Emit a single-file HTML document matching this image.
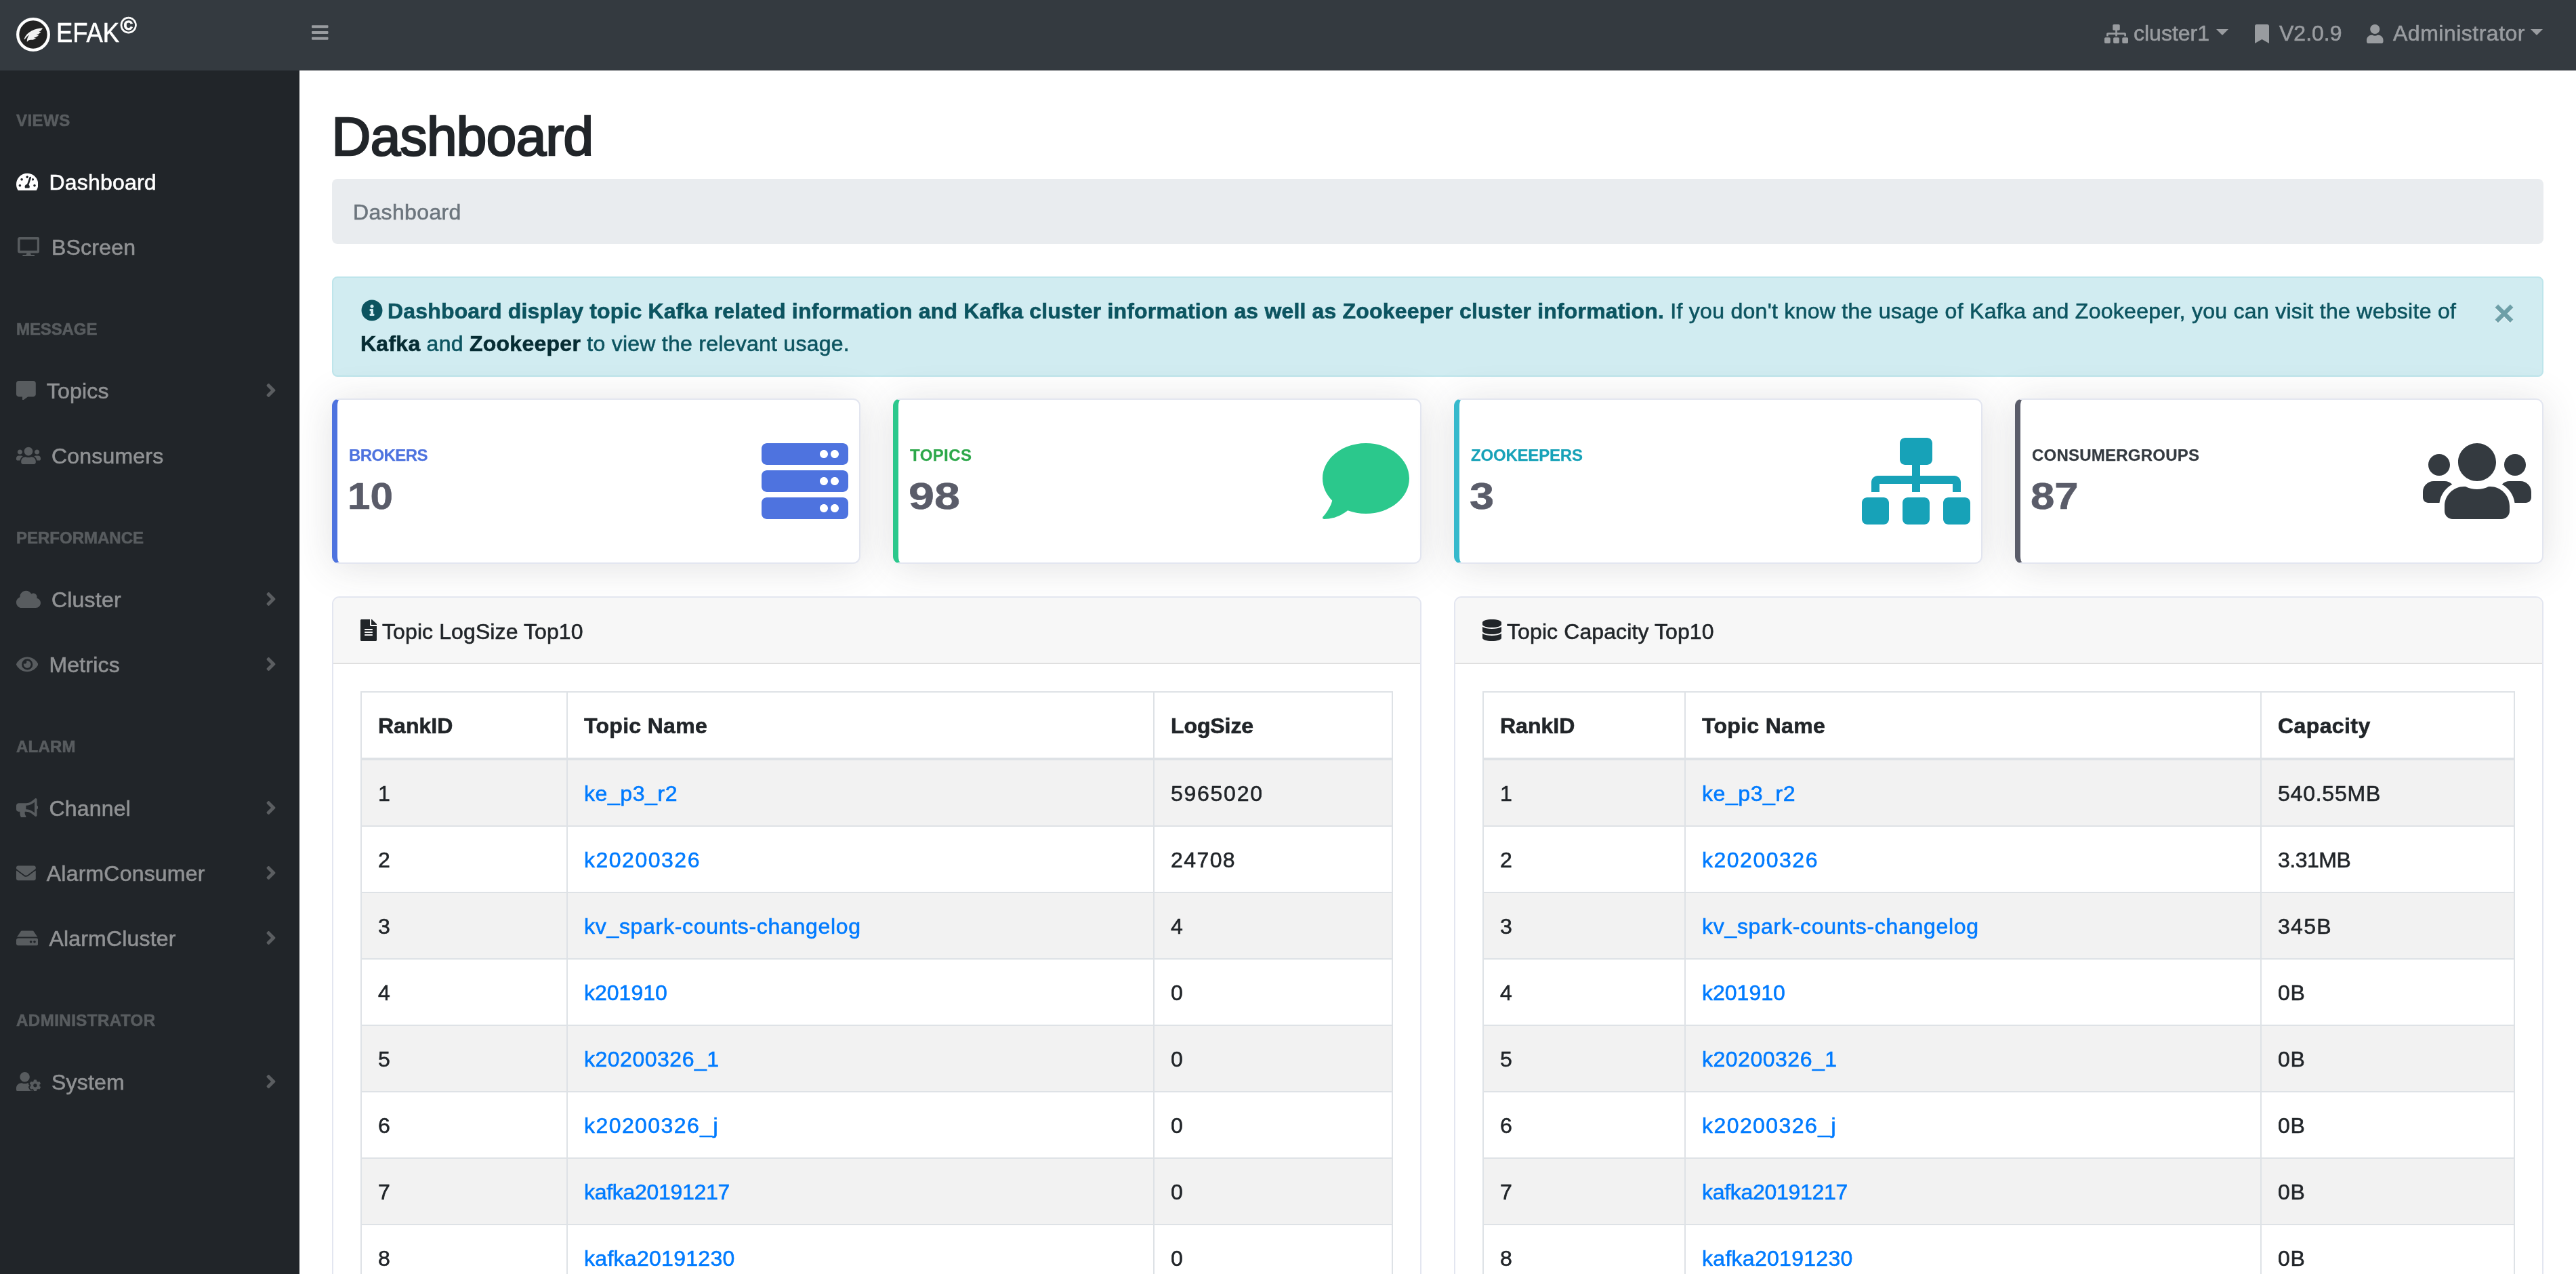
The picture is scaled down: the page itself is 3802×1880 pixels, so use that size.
<!DOCTYPE html>
<html lang="en">
<head>
<meta charset="utf-8">
<title>Dashboard - EFAK</title>
<style>
*{box-sizing:border-box;margin:0;padding:0}
html,body{width:3802px;height:1880px;overflow:hidden;background:#fff}
body{-webkit-text-stroke:.6px;font-family:"Liberation Sans",Arial,sans-serif;font-size:32px;line-height:48px;color:#212529;position:relative}
svg{display:block;fill:currentColor;flex:none}
a{text-decoration:none;color:#007bff}
.abs{position:absolute;white-space:nowrap}
.sx{display:inline-block;transform-origin:0 50%;white-space:nowrap}

/* top nav */
#topnav,#side,#main{will-change:transform}
#topnav{position:absolute;left:0;top:0;width:3802px;height:104px;background:#343a40;z-index:5}
#logo{position:absolute;left:24px;top:26px;width:50px;height:50px}
#brand{position:absolute;left:83px;top:24px;font-size:40px;line-height:48px;color:#fff;white-space:nowrap}
#brand sup{font-size:33px;position:absolute;left:94.5px;top:-10px;line-height:48px;font-weight:bold;-webkit-text-stroke:.8px}
#burger{position:absolute;left:460px;top:34px;color:#999ca0}
.tn{position:absolute;top:24px;height:48px;color:#999ca0;white-space:nowrap}
.tn svg{position:absolute}
.caret{position:absolute;width:0;height:0;border-left:9.6px solid transparent;border-right:9.6px solid transparent;border-top:9.6px solid #999ca0}

/* sidebar */
#side{position:absolute;left:0;top:104px;width:442px;height:1776px;background:#212529}
.sh{height:116px;padding:56px 0 0 24px;font-size:24px;line-height:36px;font-weight:bold;color:#585c5f;text-transform:uppercase;white-space:nowrap}
.sl{letter-spacing:.2px;position:relative;height:96px;padding:25px 0 23px 24px;color:#909294;white-space:nowrap;display:flex;align-items:flex-start}
.sl.act{color:#fff}
.sl .ic{color:#585c5f;height:48px;display:flex;align-items:center;margin-right:16px;margin-top:-1px}
.sl.act .ic{color:#fff}
.sl .ar{position:absolute;left:391.6px;top:32px;color:#5b5e61}

/* main */
#main{position:absolute;left:442px;top:104px;width:3360px;height:1776px;background:#fff;overflow:hidden}
#h1{position:absolute;left:47.5px;top:49.7px;font-size:80px;line-height:96px;font-weight:normal;letter-spacing:-.6px;-webkit-text-stroke:2.6px #212529;white-space:nowrap}
#bc{position:absolute;left:48px;top:160px;width:3264px;height:96px;background:#e9ecef;border-radius:8px;padding:25px 31px 23px;color:#6c757d;letter-spacing:.35px}
#alert{position:absolute;left:48px;top:304px;width:3264px;height:148px;background:#d1ecf1;border:2px solid #bee5eb;border-radius:8px;color:#0c5460}
#al1,#al2{position:absolute;left:40px;white-space:nowrap}
#al1{top:25px;padding-left:40px}
#al2{top:73px}
.alk{font-weight:bold;color:#062c33}
#close{position:absolute;right:41px;top:28px;font-size:52px;line-height:48px;font-weight:bold;color:#0c5460;opacity:.5;text-shadow:0 2px 0 #fff}

/* stat cards */
.stat{position:absolute;top:484px;width:780px;height:244px;background:#fff;border:2px solid #e3e6f0;border-left-width:8px;border-radius:11px;box-shadow:0 4.8px 56px 0 rgba(58,59,69,.15)}
.st{-webkit-text-stroke:.25px;position:absolute;left:17px;top:64px;font-size:24px;line-height:36px;font-weight:bold;text-transform:uppercase;white-space:nowrap}
.sn{position:absolute;left:15px;top:108px;font-size:56px;line-height:68px;font-weight:bold;color:#5a5c69;white-space:nowrap}
.c1{border-left-color:#4e73df}.c1 .st{color:#4e73df}.c1 .si{color:#4e73df}
.c2{border-left-color:#2bc88c}.c2 .st{color:#2da84a}.c2 .si{color:#2bc88c}
.c3{border-left-color:#36b9cc}.c3 .st{color:#17a2b8}.c3 .si{color:#17a2b8}
.c4{border-left-color:#5a5c69}.c4 .st{color:#343a40}.c4 .si{color:#343a40}

/* panels */
.panel{position:absolute;top:776px;width:1608px;height:1300px;background:#fff;border:2px solid #e3e6f0;border-radius:11px;overflow:hidden}
.ph{position:relative;height:98px;background:#f7f7f7;border-bottom:2px solid #dfdfdf}
.pb{padding:40px}
table{border-collapse:separate;border-spacing:0;table-layout:fixed;width:1524px}
th:last-child,td:last-child{border-right:2px solid #dee2e6}
th,td{border-left:2px solid #dee2e6;padding:25px 24px 23px 24px;text-align:left;white-space:nowrap;height:98px;border-bottom:2px solid #dee2e6}
th{border-top:2px solid #dee2e6;border-bottom:4px solid #dee2e6;height:102px;font-weight:bold}
tbody tr:nth-child(odd) td{background:#f2f2f2}
</style>
</head>
<body>

<div id="topnav">
  <svg id="logo" viewBox="0 0 50 50"><circle cx="25" cy="25" r="22.8" fill="#222" stroke="#fff" stroke-width="4.3"/><path d="M39 15.200C28 16 15.500 20.500 11.800 31c-.3 1.200.5 1.600 1.200.6 1.500-2.300 3.500-4.600 6-6.100-2 2.500-3.500 6.500-3.200 10.600 1.700-2.600 3.700-3.500 6.200-3.300 3 .2 5.500-.8 7.500-2.800-1.500.3-2.700.2-3.700-.2 3.200-.5 6-2 7.700-4.500-1.500.5-2.700.5-3.700.2 3.200-.9 5.500-2.700 6.700-4.700-1.200.5-2.200.5-3.100.3 2.600-1.300 4.400-3.300 5.600-5.900z" fill="#f2f2f2"/></svg>
  <div id="brand"><span class="sx" style="transform:scaleX(.91)">EFAK</span><sup>©</sup></div>
  <svg id="burger" width="24.5" height="28" viewBox="0 0 448 512"><path d="M16 132h416c8.837 0 16-7.163 16-16V76c0-8.837-7.163-16-16-16H16C7.163 60 0 67.163 0 76v40c0 8.837 7.163 16 16 16zm0 160h416c8.837 0 16-7.163 16-16v-40c0-8.837-7.163-16-16-16H16c-8.837 0-16 7.163-16 16v40c0 8.837 7.163 16 16 16zm0 160h416c8.837 0 16-7.163 16-16v-40c0-8.837-7.163-16-16-16H16c-8.837 0-16 7.163-16 16v40c0 8.837 7.163 16 16 16z"/></svg>

  <div class="tn" style="left:3106px"><svg style="left:0;top:12px" width="35.0" height="28" viewBox="0 0 640 512"><path d="M128 352H32c-17.670 0-32 14.330-32 32v96c0 17.670 14.330 32 32 32h96c17.670 0 32-14.330 32-32v-96c0-17.670-14.330-32-32-32zm-24-80h192v48h48v-48h192v48h48v-57.590c0-21.170-17.230-38.410-38.410-38.410H344v-64h40c17.670 0 32-14.330 32-32V32c0-17.670-14.330-32-32-32H256c-17.670 0-32 14.330-32 32v96c0 17.670 14.330 32 32 32h40v64H94.410C73.230 224 56 241.230 56 262.410V320h48v-48zm264 80h-96c-17.670 0-32 14.330-32 32v96c0 17.670 14.330 32 32 32h96c17.670 0 32-14.330 32-32v-96c0-17.670-14.330-32-32-32zm240 0h-96c-17.670 0-32 14.330-32 32v96c0 17.670 14.330 32 32 32h96c17.670 0 32-14.330 32-32v-96c0-17.670-14.330-32-32-32z"/></svg><span class="abs" style="left:43px;top:1px">cluster1</span><i class="caret" style="left:165px;top:19px"></i></div>
  <div class="tn" style="left:3328px"><svg style="left:0;top:12px" width="21.0" height="28" viewBox="0 0 384 512"><path d="M0 512V48C0 21.490 21.490 0 48 0h288c26.510 0 48 21.490 48 48v464L192 400 0 512z"/></svg><span class="abs" style="left:36px;top:1px">V2.0.9</span></div>
  <div class="tn" style="left:3492px"><svg style="left:1px;top:12px" width="24.5" height="28" viewBox="0 0 448 512"><path d="M224 256c70.700 0 128-57.300 128-128S294.700 0 224 0 96 57.300 96 128s57.300 128 128 128zm89.600 32h-16.700c-22.200 10.200-46.900 16-72.900 16s-50.600-5.800-72.900-16h-16.700C60.200 288 0 348.200 0 422.400V464c0 26.500 21.500 48 48 48h352c26.500 0 48-21.500 48-48v-41.600c0-74.200-60.200-134.400-134.400-134.400z"/></svg><span class="abs" style="left:40px;top:1px;letter-spacing:.5px">Administrator</span><i class="caret" style="left:243px;top:19px"></i></div>
</div>

<div id="side">
<div class="sh" style="letter-spacing:0.45px">Views</div>
<div class="sl act"><span class="ic" style="width:32.4px;justify-content:center"><svg width="32.4" height="28.8" viewBox="0 0 576 512"><path d="M288 32C128.940 32 0 160.940 0 320c0 52.800 14.250 102.260 39.060 144.800 5.610 9.620 16.300 15.200 27.440 15.200h443c11.140 0 21.830-5.580 27.440-15.200C561.750 422.260 576 372.800 576 320c0-159.060-128.940-288-288-288zm0 64c14.710 0 26.580 10.130 30.320 23.650-1.110 2.260-2.640 4.230-3.450 6.670l-9.220 27.670c-5.130 3.490-10.970 6.010-17.640 6.010-17.670 0-32-14.330-32-32S270.330 96 288 96zM96 384c-17.670 0-32-14.330-32-32s14.330-32 32-32 32 14.330 32 32-14.330 32-32 32zm48-160c-17.670 0-32-14.330-32-32s14.330-32 32-32 32 14.330 32 32-14.330 32-32 32zm246.770-72.410l-61.330 184C343.130 347.330 352 364.540 352 384c0 11.720-3.380 22.550-8.880 32H232.880c-5.500-9.450-8.880-20.280-8.880-32 0-33.940 26.500-61.430 59.900-63.590l61.340-184.010c4.170-12.560 17.730-19.450 30.360-15.170 12.570 4.190 19.350 17.790 15.170 30.360zm14.660 57.200l15.520-46.550c3.470-1.290 7.130-2.230 11.050-2.230 17.670 0 32 14.330 32 32s-14.330 32-32 32c-11.380-.01-20.890-6.280-26.570-15.220zM480 384c-17.670 0-32-14.330-32-32s14.330-32 32-32 32 14.330 32 32-14.330 32-32 32z"/></svg></span><span>Dashboard</span></div>
<div class="sl"><span class="ic" style="width:36.0px;justify-content:center"><svg width="32.4" height="28.8" viewBox="0 0 576 512"><path d="M528 0H48C21.500 0 0 21.500 0 48v320c0 26.500 21.500 48 48 48h192l-16 48h-72c-13.300 0-24 10.700-24 24s10.700 24 24 24h272c13.300 0 24-10.700 24-24s-10.700-24-24-24h-72l-16-48h192c26.500 0 48-21.500 48-48V48c0-26.500-21.500-48-48-48zm-16 352H64V64h448v288z"/></svg></span><span>BScreen</span></div>
<div class="sh" style="letter-spacing:-0.1px">Message</div>
<div class="sl"><span class="ic" style="width:28.8px;justify-content:center"><svg width="28.8" height="28.8" viewBox="0 0 512 512"><path d="M448 0H64C28.700 0 0 28.700 0 64v288c0 35.300 28.700 64 64 64h96v84c0 9.800 11.200 15.500 19.100 9.700L304 416h144c35.300 0 64-28.700 64-64V64c0-35.300-28.700-64-64-64z"/></svg></span><span>Topics</span><svg class="ar" width="16.0" height="32" viewBox="0 0 256 512"><path d="M224.300 273l-136 136c-9.400 9.400-24.600 9.400-33.900 0l-22.600-22.600c-9.400-9.400-9.400-24.600 0-33.900l96.400-96.400-96.400-96.400c-9.400-9.400-9.400-24.600 0-33.900L54.300 103c9.400-9.400 24.600-9.400 33.900 0l136 136c9.500 9.400 9.500 24.600.1 34z"/></svg></div>
<div class="sl"><span class="ic" style="width:36.0px;justify-content:center"><svg width="36.0" height="28.8" viewBox="0 0 640 512"><path d="M96 224c35.300 0 64-28.700 64-64s-28.700-64-64-64-64 28.700-64 64 28.700 64 64 64zm448 0c35.300 0 64-28.700 64-64s-28.700-64-64-64-64 28.700-64 64 28.700 64 64 64zm32 32h-64c-17.600 0-33.500 7.100-45.100 18.600 40.300 22.100 68.900 62 75.100 109.400h66c17.700 0 32-14.300 32-32v-32c0-35.300-28.700-64-64-64zm-256 0c61.900 0 112-50.100 112-112S381.900 32 320 32 208 82.100 208 144s50.100 112 112 112zm76.800 32h-8.300c-20.800 10-43.900 16-68.500 16s-47.600-6-68.500-16h-8.300C179.600 288 128 339.600 128 403.200V432c0 26.500 21.500 48 48 48h288c26.500 0 48-21.500 48-48v-28.800c0-63.600-51.600-115.200-115.200-115.200zm-223.700-13.400C161.500 263.100 145.600 256 128 256H64c-35.300 0-64 28.700-64 64v32c0 17.700 14.300 32 32 32h65.900c6.300-47.400 34.900-87.300 75.200-109.400z"/></svg></span><span>Consumers</span></div>
<div class="sh" style="letter-spacing:0px">Performance</div>
<div class="sl"><span class="ic" style="width:36.0px;justify-content:center"><svg width="36.0" height="28.8" viewBox="0 0 640 512"><path d="M537.600 226.600c4.100-10.700 6.400-22.400 6.400-34.600 0-53-43-96-96-96-19.700 0-38.100 6-53.300 16.200C367 64.200 315.300 32 256 32c-88.400 0-160 71.600-160 160 0 2.700.1 5.400.2 8.100C40.200 219.800 0 273.200 0 336c0 79.500 64.500 144 144 144h368c70.700 0 128-57.300 128-128 0-61.900-44-113.600-102.400-125.400z"/></svg></span><span>Cluster</span><svg class="ar" width="16.0" height="32" viewBox="0 0 256 512"><path d="M224.300 273l-136 136c-9.400 9.400-24.600 9.400-33.900 0l-22.600-22.600c-9.400-9.400-9.400-24.600 0-33.900l96.400-96.400-96.400-96.400c-9.400-9.400-9.400-24.600 0-33.900L54.300 103c9.400-9.400 24.600-9.400 33.900 0l136 136c9.500 9.400 9.500 24.600.1 34z"/></svg></div>
<div class="sl"><span class="ic" style="width:32.4px;justify-content:center"><svg width="32.4" height="28.8" viewBox="0 0 576 512"><path d="M572.520 241.400C518.290 135.590 410.930 64 288 64S57.680 135.640 3.480 241.410a32.350 32.350 0 0 0 0 29.190C57.710 376.410 165.070 448 288 448s230.320-71.640 284.520-177.410a32.350 32.350 0 0 0 0-29.190zM288 400a144 144 0 1 1 144-144 143.930 143.930 0 0 1-144 144zm0-240a95.310 95.310 0 0 0-25.310 3.790 47.850 47.850 0 0 1-66.900 66.900A95.780 95.780 0 1 0 288 160z"/></svg></span><span>Metrics</span><svg class="ar" width="16.0" height="32" viewBox="0 0 256 512"><path d="M224.300 273l-136 136c-9.400 9.400-24.600 9.400-33.900 0l-22.600-22.600c-9.400-9.400-9.400-24.600 0-33.900l96.400-96.400-96.400-96.400c-9.400-9.400-9.400-24.600 0-33.900L54.300 103c9.400-9.400 24.600-9.400 33.900 0l136 136c9.500 9.400 9.500 24.600.1 34z"/></svg></div>
<div class="sh" style="letter-spacing:0.2px">Alarm</div>
<div class="sl"><span class="ic" style="width:32.4px;justify-content:center"><svg width="32.4" height="28.8" viewBox="0 0 576 512"><path d="M576 240c0-23.630-12.950-44.040-32-55.120V32.010C544 23.260 537.020 0 512 0c-7.120 0-14.190 2.380-19.980 7.020l-85.030 68.030C364.280 109.190 310.660 128 256 128H64c-35.350 0-64 28.650-64 64v96c0 35.350 28.650 64 64 64h33.700c-1.390 10.480-2.180 21.140-2.180 32 0 39.770 9.260 77.350 25.560 110.940 5.190 10.690 16.520 17.060 28.400 17.060h74.280c26.050 0 41.690-29.840 25.900-50.560-16.400-21.520-26.150-48.360-26.150-77.440 0-11.110 1.620-21.790 4.410-32H256c54.660 0 108.280 18.810 150.980 52.950l85.030 68.030a32.023 32.023 0 0 0 19.980 7.020c24.920 0 32-22.780 32-32V295.130C563.050 284.040 576 263.630 576 240zm-96 141.420l-33.050-26.440C392.950 311.780 325.120 288 256 288v-96c69.120 0 136.950-23.780 190.950-66.980L480 98.580v282.840z"/></svg></span><span>Channel</span><svg class="ar" width="16.0" height="32" viewBox="0 0 256 512"><path d="M224.300 273l-136 136c-9.400 9.400-24.600 9.400-33.900 0l-22.600-22.600c-9.400-9.400-9.400-24.600 0-33.900l96.400-96.400-96.400-96.400c-9.400-9.400-9.400-24.600 0-33.900L54.300 103c9.400-9.400 24.600-9.400 33.900 0l136 136c9.500 9.400 9.500 24.600.1 34z"/></svg></div>
<div class="sl"><span class="ic" style="width:28.8px;justify-content:center"><svg width="28.8" height="28.8" viewBox="0 0 512 512"><path d="M502.300 190.800c3.900-3.100 9.700-.2 9.700 4.700V400c0 26.500-21.500 48-48 48H48c-26.500 0-48-21.500-48-48V195.600c0-5 5.700-7.800 9.700-4.700 22.400 17.400 52.100 39.500 154.100 113.600 21.100 15.400 56.700 47.800 92.200 47.600 35.700.3 72-32.800 92.300-47.600 102-74.100 131.600-96.300 154-113.700zM256 320c23.200.4 56.600-29.200 73.400-41.400 132.700-96.300 142.800-104.700 173.400-128.700 5.800-4.500 9.200-11.500 9.200-18.900v-19c0-26.500-21.500-48-48-48H48C21.500 64 0 85.500 0 112v19c0 7.400 3.400 14.300 9.200 18.900 30.600 23.900 40.700 32.400 173.400 128.700 16.800 12.200 50.200 41.800 73.400 41.400z"/></svg></span><span>AlarmConsumer</span><svg class="ar" width="16.0" height="32" viewBox="0 0 256 512"><path d="M224.300 273l-136 136c-9.400 9.400-24.600 9.400-33.900 0l-22.600-22.600c-9.400-9.400-9.400-24.600 0-33.900l96.400-96.400-96.400-96.400c-9.400-9.400-9.400-24.600 0-33.900L54.300 103c9.400-9.400 24.600-9.400 33.900 0l136 136c9.500 9.400 9.500 24.600.1 34z"/></svg></div>
<div class="sl"><span class="ic" style="width:32.4px;justify-content:center"><svg width="32.4" height="28.8" viewBox="0 0 576 512"><path d="M576 304v96c0 26.510-21.490 48-48 48H48c-26.510 0-48-21.490-48-48v-96c0-26.510 21.490-48 48-48h480c26.510 0 48 21.490 48 48zm-48-80a79.557 79.557 0 0 1 30.777 6.165L462.250 85.374A48.003 48.003 0 0 0 422.311 64H153.689a48 48 0 0 0-39.938 21.374L17.223 230.165A79.557 79.557 0 0 1 48 224h480zm-48 96c-17.673 0-32 14.327-32 32s14.327 32 32 32 32-14.327 32-32-14.327-32-32-32zm-96 0c-17.673 0-32 14.327-32 32s14.327 32 32 32 32-14.327 32-32-14.327-32-32-32z"/></svg></span><span>AlarmCluster</span><svg class="ar" width="16.0" height="32" viewBox="0 0 256 512"><path d="M224.300 273l-136 136c-9.400 9.400-24.600 9.400-33.900 0l-22.600-22.600c-9.400-9.400-9.400-24.600 0-33.900l96.400-96.400-96.400-96.400c-9.400-9.400-9.400-24.600 0-33.900L54.300 103c9.400-9.400 24.600-9.400 33.900 0l136 136c9.500 9.400 9.500 24.600.1 34z"/></svg></div>
<div class="sh" style="letter-spacing:0.5px">Administrator</div>
<div class="sl"><span class="ic" style="width:36.0px;justify-content:center"><svg width="36.0" height="28.8" viewBox="0 0 640 512"><path d="M610.500 373.300c2.600-14.100 2.600-28.500 0-42.600l25.800-14.900c3-1.700 4.300-5.200 3.300-8.500-6.700-21.600-18.200-41.200-33.200-57.400-2.300-2.500-6-3.100-9-1.400l-25.800 14.900c-10.900-9.300-23.400-16.500-36.900-21.300v-29.800c0-3.400-2.400-6.400-5.700-7.100-22.300-5-45-4.800-66.200 0-3.300.7-5.700 3.700-5.700 7.100v29.800c-13.500 4.800-26 12-36.900 21.300l-25.800-14.900c-2.900-1.700-6.700-1.100-9 1.400-15 16.200-26.500 35.800-33.200 57.400-1 3.300.4 6.800 3.300 8.500l25.800 14.900c-2.600 14.100-2.600 28.500 0 42.600l-25.800 14.900c-3 1.700-4.300 5.200-3.300 8.500 6.700 21.600 18.200 41.100 33.200 57.400 2.300 2.500 6 3.100 9 1.400l25.800-14.900c10.900 9.300 23.400 16.500 36.900 21.300v29.800c0 3.400 2.400 6.400 5.700 7.100 22.300 5 45 4.800 66.200 0 3.300-.7 5.700-3.700 5.700-7.100v-29.800c13.500-4.800 26-12 36.900-21.300l25.800 14.900c2.900 1.700 6.700 1.100 9-1.400 15-16.200 26.500-35.800 33.200-57.400 1-3.300-.4-6.800-3.300-8.500l-25.800-14.900zM496 400.500c-26.800 0-48.500-21.800-48.500-48.500s21.800-48.500 48.500-48.500 48.500 21.800 48.500 48.500-21.700 48.500-48.500 48.500zM224 256c70.700 0 128-57.300 128-128S294.700 0 224 0 96 57.300 96 128s57.300 128 128 128zm201.200 226.500c-2.300-1.200-4.600-2.600-6.800-3.900l-7.900 4.600c-6 3.400-12.800 5.300-19.600 5.300-10.900 0-21.400-4.600-28.900-12.600-18.300-19.800-32.300-43.900-40.200-69.600-5.500-17.700 1.900-36.400 17.900-45.700l7.900-4.600c-.1-2.600-.1-5.200 0-7.800l-7.900-4.600c-16-9.200-23.400-28-17.900-45.700.9-2.900 2.200-5.800 3.200-8.700-3.800-.3-7.500-1.200-11.400-1.200h-16.700c-22.200 10.200-46.900 16-72.900 16s-50.600-5.800-72.900-16h-16.700C60.200 288 0 348.200 0 422.400V464c0 26.500 21.500 48 48 48h352c10.100 0 19.500-3.200 27.200-8.500-1.200-3.800-2-7.700-2-11.800v-9.200z"/></svg></span><span>System</span><svg class="ar" width="16.0" height="32" viewBox="0 0 256 512"><path d="M224.300 273l-136 136c-9.400 9.400-24.600 9.400-33.900 0l-22.600-22.600c-9.400-9.400-9.400-24.600 0-33.900l96.400-96.400-96.400-96.400c-9.400-9.400-9.400-24.600 0-33.900L54.300 103c9.400-9.400 24.600-9.400 33.900 0l136 136c9.500 9.400 9.500 24.600.1 34z"/></svg></div>
</div>

<div id="main">

  <h1 id="h1">Dashboard</h1>
  <div id="bc"><span>Dashboard</span></div>
  <div id="alert">
    <svg style="position:absolute;left:41px;top:32px" width="32.0" height="32" viewBox="0 0 512 512"><path d="M256 8C119.043 8 8 119.083 8 256c0 136.997 111.043 248 248 248s248-111.003 248-248C504 119.083 392.957 8 256 8zm0 110c23.196 0 42 18.804 42 42s-18.804 42-42 42-42-18.804-42-42 18.804-42 42-42zm56 254c0 6.627-5.373 12-12 12h-88c-6.627 0-12-5.373-12-12v-24c0-6.627 5.373-12 12-12h12v-64h-12c-6.627 0-12-5.373-12-12v-24c0-6.627 5.373-12 12-12h64c6.627 0 12 5.373 12 12v100h12c6.627 0 12 5.373 12 12v24z"/></svg>
    <div id="al1"><b style="letter-spacing:.17px">Dashboard display topic Kafka related information and Kafka cluster information as well as Zookeeper cluster information.</b><span style="letter-spacing:.28px"> If you don't know the usage of Kafka and Zookeeper, you can visit the website of</span></div>
    <div id="al2" style="letter-spacing:.26px"><a class="alk">Kafka</a> and <a class="alk">Zookeeper</a> to view the relevant usage.</div>
    <span id="close">×</span>
  </div>
  <div class="stat c1" style="left:48px">
  <div class="st" style="letter-spacing:-0.6px">Brokers</div><div class="sn"><span class="sx" style="transform:scaleX(1.075)">10</span></div>
  <svg class="si" style="position:absolute;right:16px;top:56px" width="128.0" height="128" viewBox="0 0 512 512"><path d="M480 160H32c-17.673 0-32-14.327-32-32V64c0-17.673 14.327-32 32-32h448c17.673 0 32 14.327 32 32v64c0 17.673-14.327 32-32 32zm-48-88c-13.255 0-24 10.745-24 24s10.745 24 24 24 24-10.745 24-24-10.745-24-24-24zm-64 0c-13.255 0-24 10.745-24 24s10.745 24 24 24 24-10.745 24-24-10.745-24-24-24zm112 248H32c-17.673 0-32-14.327-32-32v-64c0-17.673 14.327-32 32-32h448c17.673 0 32 14.327 32 32v64c0 17.673-14.327 32-32 32zm-48-88c-13.255 0-24 10.745-24 24s10.745 24 24 24 24-10.745 24-24-10.745-24-24-24zm-64 0c-13.255 0-24 10.745-24 24s10.745 24 24 24 24-10.745 24-24-10.745-24-24-24zm112 248H32c-17.673 0-32-14.327-32-32v-64c0-17.673 14.327-32 32-32h448c17.673 0 32 14.327 32 32v64c0 17.673-14.327 32-32 32zm-48-88c-13.255 0-24 10.745-24 24s10.745 24 24 24 24-10.745 24-24-10.745-24-24-24zm-64 0c-13.255 0-24 10.745-24 24s10.745 24 24 24 24-10.745 24-24-10.745-24-24-24z"/></svg>
</div>
<div class="stat c2" style="left:876px">
  <div class="st" style="letter-spacing:0.4px">Topics</div><div class="sn"><span class="sx" style="transform:scaleX(1.22)">98</span></div>
  <svg class="si" style="position:absolute;right:16px;top:56px" width="128.0" height="128" viewBox="0 0 512 512"><path d="M256 32C114.6 32 0 125.1 0 240c0 49.6 21.4 95 57 130.7C44.5 421.1 2.7 466 2.2 466.5c-2.2 2.3-2.8 5.7-1.5 8.7S4.8 480 8 480c66.300 0 116-31.800 140.600-51.400 32.700 12.300 69 19.400 107.400 19.400 141.400 0 256-93.100 256-208S397.400 32 256 32z"/></svg>
</div>
<div class="stat c3" style="left:1704px">
  <div class="st" style="letter-spacing:-0.2px">Zookeepers</div><div class="sn"><span class="sx" style="transform:scaleX(1.16)">3</span></div>
  <svg class="si" style="position:absolute;right:16px;top:56px" width="160.0" height="128" viewBox="0 0 640 512"><path d="M128 352H32c-17.670 0-32 14.330-32 32v96c0 17.670 14.330 32 32 32h96c17.670 0 32-14.330 32-32v-96c0-17.670-14.330-32-32-32zm-24-80h192v48h48v-48h192v48h48v-57.590c0-21.170-17.230-38.410-38.410-38.410H344v-64h40c17.670 0 32-14.330 32-32V32c0-17.670-14.330-32-32-32H256c-17.670 0-32 14.330-32 32v96c0 17.670 14.330 32 32 32h40v64H94.410C73.230 224 56 241.230 56 262.410V320h48v-48zm264 80h-96c-17.670 0-32 14.330-32 32v96c0 17.670 14.330 32 32 32h96c17.670 0 32-14.330 32-32v-96c0-17.670-14.330-32-32-32zm240 0h-96c-17.670 0-32 14.330-32 32v96c0 17.670 14.330 32 32 32h96c17.670 0 32-14.330 32-32v-96c0-17.670-14.330-32-32-32z"/></svg>
</div>
<div class="stat c4" style="left:2532px">
  <div class="st" style="letter-spacing:0.23px">ConsumerGroups</div><div class="sn"><span class="sx" style="transform:scaleX(1.135)">87</span></div>
  <svg class="si" style="position:absolute;right:16px;top:56px" width="160.0" height="128" viewBox="0 0 640 512"><path d="M96 224c35.300 0 64-28.700 64-64s-28.700-64-64-64-64 28.700-64 64 28.700 64 64 64zm448 0c35.300 0 64-28.700 64-64s-28.700-64-64-64-64 28.700-64 64 28.700 64 64 64zm32 32h-64c-17.600 0-33.500 7.100-45.100 18.600 40.300 22.100 68.900 62 75.100 109.400h66c17.700 0 32-14.300 32-32v-32c0-35.300-28.700-64-64-64zm-256 0c61.900 0 112-50.100 112-112S381.900 32 320 32 208 82.100 208 144s50.100 112 112 112zm76.800 32h-8.300c-20.800 10-43.900 16-68.500 16s-47.600-6-68.500-16h-8.300C179.600 288 128 339.600 128 403.200V432c0 26.500 21.500 48 48 48h288c26.500 0 48-21.500 48-48v-28.800c0-63.600-51.600-115.200-115.200-115.200zm-223.700-13.400C161.500 263.100 145.600 256 128 256H64c-35.300 0-64 28.700-64 64v32c0 17.700 14.300 32 32 32h65.900c6.300-47.400 34.900-87.300 75.200-109.400z"/></svg>
</div>
  <div class="panel" style="left:48px">
  <div class="ph"><svg style="position:absolute;left:40px;top:32px" width="24.0" height="32" viewBox="0 0 384 512"><path d="M224 136V0H24C10.700 0 0 10.700 0 24v464c0 13.300 10.700 24 24 24h336c13.300 0 24-10.700 24-24V160H248c-13.200 0-24-10.800-24-24zm64 236c0 6.600-5.400 12-12 12H108c-6.600 0-12-5.400-12-12v-8c0-6.600 5.400-12 12-12h168c6.600 0 12 5.400 12 12v8zm0-64c0 6.600-5.400 12-12 12H108c-6.600 0-12-5.400-12-12v-8c0-6.600 5.400-12 12-12h168c6.600 0 12 5.400 12 12v8zm0-72v8c0 6.600-5.400 12-12 12H108c-6.600 0-12-5.400-12-12v-8c0-6.600 5.400-12 12-12h168c6.600 0 12 5.400 12 12zm96-114.100v6.100H256V0h6.100c6.400 0 12.500 2.500 17 7l97.900 98c4.500 4.500 7 10.600 7 16.900z"/></svg><span class="abs" style="left:72px;top:26px;letter-spacing:.1px">Topic LogSize Top10</span></div>
  <div class="pb"><table><col style="width:304px"><col style="width:866px"><col style="width:354px"><thead><tr><th>RankID</th><th><span style="letter-spacing:0.3px">Topic Name</span></th><th><span style="letter-spacing:-0.1px">LogSize</span></th></tr></thead><tbody>
<tr><td>1</td><td><a><span style="letter-spacing:0.57px">ke_p3_r2</span></a></td><td><span style="letter-spacing:1.73px">5965020</span></td></tr>
<tr><td>2</td><td><a><span style="letter-spacing:1.51px">k20200326</span></a></td><td><span style="letter-spacing:1.42px">24708</span></td></tr>
<tr><td>3</td><td><a><span style="letter-spacing:0.7px">kv_spark-counts-changelog</span></a></td><td>4</td></tr>
<tr><td>4</td><td><a>k201910</a></td><td>0</td></tr>
<tr><td>5</td><td><a><span style="letter-spacing:0.51px">k20200326_1</span></a></td><td>0</td></tr>
<tr><td>6</td><td><a><span style="letter-spacing:1.43px">k20200326_j</span></a></td><td>0</td></tr>
<tr><td>7</td><td><a><span style="letter-spacing:-0.29px">kafka20191217</span></a></td><td>0</td></tr>
<tr><td>8</td><td><a><span style="letter-spacing:0.29px">kafka20191230</span></a></td><td>0</td></tr>
<tr><td>9</td><td><a><span style="letter-spacing:0.3px">kafka20200101</span></a></td><td>0</td></tr>
<tr><td>10</td><td><a><span style="letter-spacing:0.3px">kafka20200102</span></a></td><td>0</td></tr>
</tbody></table></div>
</div>
<div class="panel" style="left:1704px">
  <div class="ph"><svg style="position:absolute;left:40px;top:32px" width="28.0" height="32" viewBox="0 0 448 512"><path d="M448 73.143v45.714C448 159.143 347.667 192 224 192S0 159.143 0 118.857V73.143C0 32.857 100.333 0 224 0s224 32.857 224 73.143zM448 176v102.857C448 319.143 347.667 352 224 352S0 319.143 0 278.857V176c48.125 33.143 136.208 48.572 224 48.572S399.874 209.143 448 176zm0 160v102.857C448 479.143 347.667 512 224 512S0 479.143 0 438.857V336c48.125 33.143 136.208 48.572 224 48.572S399.874 369.143 448 336z"/></svg><span class="abs" style="left:76px;top:26px;letter-spacing:.1px">Topic Capacity Top10</span></div>
  <div class="pb"><table><col style="width:298px"><col style="width:850px"><col style="width:376px"><thead><tr><th>RankID</th><th><span style="letter-spacing:0.3px">Topic Name</span></th><th><span style="letter-spacing:0.4px">Capacity</span></th></tr></thead><tbody>
<tr><td>1</td><td><a><span style="letter-spacing:0.57px">ke_p3_r2</span></a></td><td><span style="letter-spacing:0.77px">540.55MB</span></td></tr>
<tr><td>2</td><td><a><span style="letter-spacing:1.51px">k20200326</span></a></td><td><span style="letter-spacing:-0.48px">3.31MB</span></td></tr>
<tr><td>3</td><td><a><span style="letter-spacing:0.7px">kv_spark-counts-changelog</span></a></td><td><span style="letter-spacing:1.3px">345B</span></td></tr>
<tr><td>4</td><td><a>k201910</a></td><td><span style="letter-spacing:0.7px">0B</span></td></tr>
<tr><td>5</td><td><a><span style="letter-spacing:0.51px">k20200326_1</span></a></td><td><span style="letter-spacing:0.7px">0B</span></td></tr>
<tr><td>6</td><td><a><span style="letter-spacing:1.43px">k20200326_j</span></a></td><td><span style="letter-spacing:0.7px">0B</span></td></tr>
<tr><td>7</td><td><a><span style="letter-spacing:-0.29px">kafka20191217</span></a></td><td><span style="letter-spacing:0.7px">0B</span></td></tr>
<tr><td>8</td><td><a><span style="letter-spacing:0.29px">kafka20191230</span></a></td><td><span style="letter-spacing:0.7px">0B</span></td></tr>
<tr><td>9</td><td><a><span style="letter-spacing:0.3px">kafka20200101</span></a></td><td><span style="letter-spacing:0.7px">0B</span></td></tr>
<tr><td>10</td><td><a><span style="letter-spacing:0.3px">kafka20200102</span></a></td><td><span style="letter-spacing:0.7px">0B</span></td></tr>
</tbody></table></div>
</div>

</div>

</body>
</html>
